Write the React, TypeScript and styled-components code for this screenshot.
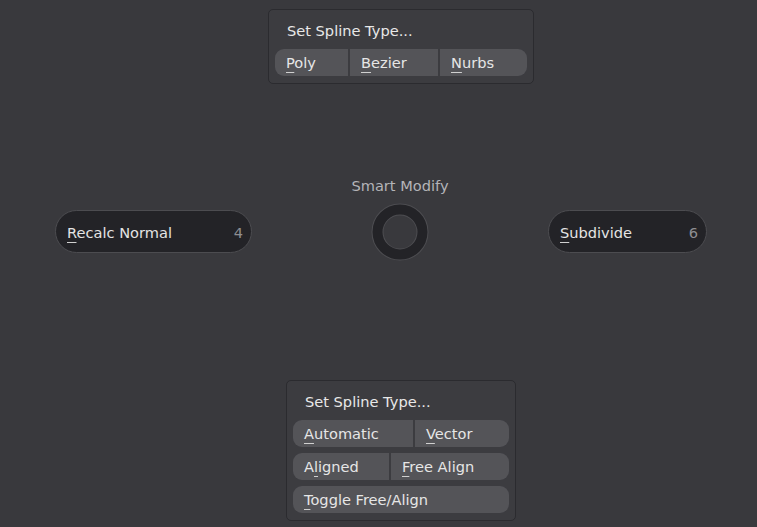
import React from "react";
import styled, { createGlobalStyle } from "styled-components";

const Global = createGlobalStyle`
  html, body { margin: 0; padding: 0; background: #39393d; overflow: hidden; }
  body { font-family: "DejaVu Sans", "Liberation Sans", sans-serif; }
`;

const Page = styled.div`
  width: 757px;
  height: 527px;
  box-sizing: border-box;
  padding: 9px 0 0 45px;
  display: flex;
  flex-direction: column;
  align-items: center;
  background: #39393d;
  color: #e4e4e4;
  font-size: 14.6px;
`;

const Panel = styled.div<{ $w: number; $mt?: number }>`
  width: ${(p) => p.$w}px;
  box-sizing: border-box;
  margin-top: ${(p) => p.$mt ?? 0}px;
  padding: 0 6px 7px 6px;
  background: #3c3c40;
  border: 1px solid #2b2b2f;
  border-radius: 5px;
  display: flex;
  flex-direction: column;
  gap: 6px;
`;

const Title = styled.div<{ $mb: number }>`
  height: 20px;
  line-height: 20px;
  padding: 11px 0 0 12px;
  margin-bottom: ${(p) => p.$mb}px;
  color: #e8e8e8;
  white-space: nowrap;
`;

const Row = styled.div`
  display: flex;
  gap: 2px;
  height: 27px;
  border-radius: 9px;
  overflow: hidden;
`;

const Seg = styled.div<{ $w?: number }>`
  ${(p) => (p.$w ? `width: ${p.$w}px; flex: none;` : `flex: 1;`)}
  box-sizing: border-box;
  background: #545458;
  padding-left: 11px;
  line-height: 28px;
  color: #e6e6e6;
  white-space: nowrap;
`;

const Key = styled.span`
  text-decoration: underline;
  text-decoration-thickness: 1px;
  text-underline-offset: 4px;
  text-decoration-color: #d0d0d0;
`;

const Middle = styled.div`
  width: 100%;
  box-sizing: border-box;
  padding-right: 2px;
  margin-top: 93px;
  display: grid;
  grid-template-columns: 1fr 296px 1fr;
  align-items: end;
`;

const PieButton = styled.div<{ $w: number; $side: "left" | "right" }>`
  justify-self: ${(p) => (p.$side === "left" ? "end" : "start")};
  width: ${(p) => p.$w}px;
  height: 43px;
  margin-bottom: 8px;
  box-sizing: border-box;
  border: 1px solid #4c4c50;
  border-radius: 22px;
  background: #232327;
  display: flex;
  align-items: center;
  justify-content: space-between;
  padding: 1px 8px 0 11px;
  color: #e4e4e4;
  white-space: nowrap;
`;

const Num = styled.span`
  color: #8e8e92;
`;

const Center = styled.div`
  display: flex;
  flex-direction: column;
  align-items: center;
  gap: 8px;
`;

const PieTitle = styled.div`
  color: #b4b4b8;
  line-height: 18px;
  white-space: nowrap;
`;

const Ring = () => (
  <svg width="58" height="58" viewBox="0 0 58 58">
    <circle cx="29" cy="29" r="22.5" fill="none" stroke="#4d4d51" strokeWidth="12" />
    <circle cx="29" cy="29" r="22.5" fill="none" stroke="#232327" strokeWidth="10" />
  </svg>
);

const K = ({ k, rest, pre }: { k: string; rest: string; pre?: string }) => (
  <>
    {pre}
    <Key>{k}</Key>
    {rest}
  </>
);

export default function App() {
  return (
    <>
      <Global />
      <Page>
        <Panel $w={266}>
          <Title $mb={2}>Set Spline Type...</Title>
          <Row>
            <Seg $w={73}><K k="P" rest="oly" /></Seg>
            <Seg $w={88}><K k="B" rest="ezier" /></Seg>
            <Seg><K k="N" rest="urbs" /></Seg>
          </Row>
        </Panel>
        <Middle>
          <PieButton $side="left" $w={197}>
            <span><K k="R" rest="ecalc Normal" /></span>
            <Num>4</Num>
          </PieButton>
          <Center>
            <PieTitle>Smart Modify</PieTitle>
            <Ring />
          </Center>
          <PieButton $side="right" $w={159}>
            <span><K k="S" rest="ubdivide" /></span>
            <Num>6</Num>
          </PieButton>
        </Middle>
        <Panel $w={230} $mt={119}>
          <Title $mb={2}>Set Spline Type...</Title>
          <Row>
            <Seg $w={120}><K k="A" rest="utomatic" /></Seg>
            <Seg><K k="V" rest="ector" /></Seg>
          </Row>
          <Row>
            <Seg $w={96}><K pre="A" k="l" rest="igned" /></Seg>
            <Seg><K k="F" rest="ree Align" /></Seg>
          </Row>
          <Row>
            <Seg><K k="T" rest="oggle Free/Align" /></Seg>
          </Row>
        </Panel>
      </Page>
    </>
  );
}
